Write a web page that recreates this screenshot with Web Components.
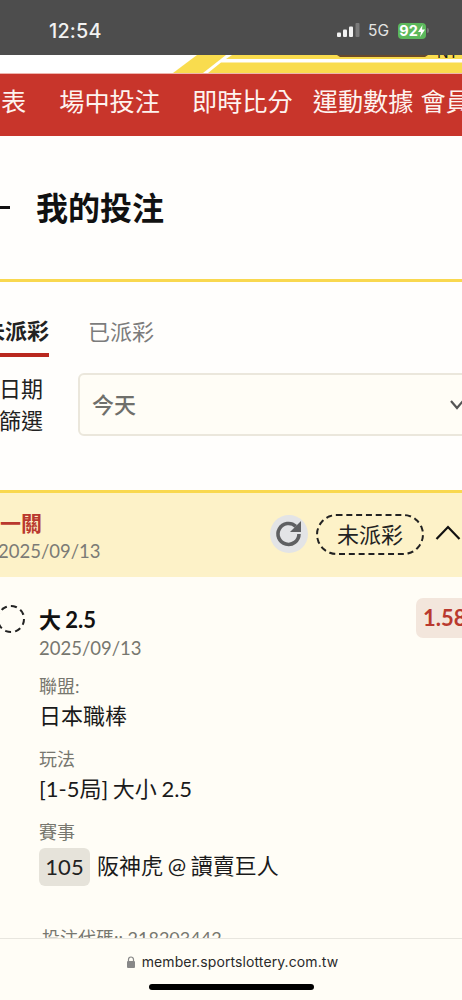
<!DOCTYPE html>
<html lang="zh-Hant"><head><meta charset="utf-8"><title>我的投注</title>
<style>
html,body{margin:0;padding:0;background:#fffefc}
body{font-family:Lato,"Noto Sans CJK TC",sans-serif;width:462px;height:1000px;overflow:hidden}
</style></head><body>
<app-page></app-page>
<script>
const FONT='Lato,"Noto Sans CJK TC",sans-serif';
function def(name,html){
  customElements.define(name,class extends HTMLElement{
    constructor(){super();this.attachShadow({mode:'open'}).innerHTML=html;}
  });
}
def('status-bar',`<style>
:host{display:flex;align-items:center;height:55px;background:#4d4d4d;color:#f2f2f2;box-sizing:border-box;padding:6px 0 0 49px;font-family:Inter,Roboto,sans-serif}
.t{font-size:19.800px;font-weight:500;letter-spacing:.2px}
.r{margin-left:auto;display:flex;align-items:center;margin-right:33px}
.g{font-size:15.500px;margin:0 9px 0 8px;color:#e4e4e4}
.b{display:flex;align-items:center;justify-content:center;width:28px;height:16px;background:#5cb85c;border-radius:4px;color:#fff;font-size:14.500px;font-weight:700;line-height:16px}
.n{width:2px;height:5px;background:#777;border-radius:0 2px 2px 0;margin-left:1px}
</style><span class="t">12:54</span><div class="r">
<svg width="23" height="15" viewBox="0 0 23 15"><rect x="0" y="9.500" width="4" height="4.500" rx="1" fill="#f2f2f2"/><rect x="6" y="6.500" width="4" height="7.500" rx="1" fill="#f2f2f2"/><rect x="12" y="3.500" width="4" height="10.500" rx="1" fill="#f2f2f2"/><rect x="18.500" y="0" width="4" height="14" rx="1" fill="#7a7a7a"/></svg>
<span class="g">5G</span><span class="b">92<svg width="7" height="12" viewBox="0 0 7 12"><path d="M4.500 0 0 7h3l-1 5 5-7.500H4z" fill="#fff"/></svg></span><span class="n"></span></div>`);
def('top-band',`<style>
:host{display:block;height:18px;background:#fff;overflow:hidden}
svg{display:block}
</style><svg width="462" height="18" viewBox="0 0 462 18">
<path d="M197 0 173 18H203L226 0Z" fill="#f9dc4e"/>
<path d="M232 0 226 4H462V0Z" fill="#f9dc4e"/>
<path d="M221 7.500H462V18H208Z" fill="#f9dc4e"/>
<path d="M337 0H428L425 2H340Z" fill="#6a4a2a"/>
<text x="437" y="3" font-family="Liberation Sans,sans-serif" font-size="16" fill="#222">NT</text></svg>`);
def('main-nav',`<style>
:host{display:flex;height:63px;align-items:center;background:#c8352b;color:#fdf3ef;white-space:nowrap;overflow:hidden;border-top:1px solid #eeb5ae;box-sizing:border-box;font:400 25.200px/1 ${FONT};padding:0 0 6px 0;}
span{flex:none}
</style><span style="margin-left:1px">表</span><span style="margin-left:33px">場中投注</span><span style="margin-left:32px">即時比分</span><span style="margin-left:20px">運動數據</span><span style="margin-left:7px">會員</span>`);
def('page-title',`<style>
:host{display:flex;align-items:center;height:146px;box-sizing:border-box;border-bottom:3px solid #f9d84f;background:#fffefc;color:#111;font:700 32px/1 ${FONT}}
i{display:block;width:10px;height:3px;background:#111;margin-right:26px}
</style><i></i><slot></slot>`);
def('bet-tabs',`<style>
:host{display:flex;height:91px;box-sizing:border-box;padding-top:39px;background:#fffefc;font:400 22px/1 ${FONT};overflow:hidden;align-items:flex-start}
.a{font-weight:700;color:#222;margin-left:-17px;width:66px;height:37px;box-sizing:border-box;border-bottom:4px solid #b9281f;margin-top:-1px;margin-right:39px;white-space:nowrap}
.b{color:#7c7c7c}
</style><span class="a">未派彩</span><span class="b">已派彩</span>`);
def('date-filter',`<style>
:host{display:flex;height:63px;background:#fffefc;font:400 22px/32px ${FONT};color:#222;align-items:center;overflow:visible}
.l{width:79px;flex:none;margin:1px 0 0 -1px}
.s{flex:none;width:420px;height:63px;box-sizing:border-box;background:#fffdf6;border:2px solid #ebe7dc;border-radius:6px;display:flex;align-items:center;padding-left:12px;color:#6f6f6b;font-weight:500}
</style><div class="l">日期<br>篩選</div><div class="s">今天<svg width="14" height="10" viewBox="0 0 14 10" style="margin-left:314px;flex:none"><path d="M1 1 7 8 13 1" stroke="#555" stroke-width="2.200" fill="none"/></svg></div>`);
def('card-head',`<style>
:host{display:flex;align-items:center;height:87px;box-sizing:border-box;margin-top:54px;border-top:3px solid #f9d84f;background:#fdf2c8;overflow:hidden}
.l{flex:none;margin-left:-21px;width:272px}
.n{font:700 21px/26px ${FONT};color:#b9392e;margin-top:1px}
.d{font:400 18.500px/26px ${FONT};color:#7b7b76;margin:2px 0 -3px 19px}
.r{width:38px;height:38px;border-radius:50%;background:#e3e4e6;display:flex;align-items:center;justify-content:center;flex:none;margin:-2px 8px 0 19px}
.p{flex:none;width:108px;height:41px;box-sizing:border-box;border:2px dashed #222;border-radius:21px;display:flex;align-items:center;justify-content:center;font:400 22px/1 ${FONT};color:#222;margin-top:-1px}
.c{margin:-6px 0 0 11px;flex:none}
</style><div class="l"><div class="n">二一關</div><div class="d">2025/09/13</div></div>
<span class="r"><svg width="30" height="30" viewBox="0 0 30 30"><path d="M25 15a10.500 10.500 0 1 1-3.200-7.600" stroke="#5f6062" stroke-width="3.600" fill="none"/><path d="M27 2v11H16z" fill="#5f6062"/></svg></span>
<span class="p">未派彩</span><svg class="c" width="26" height="15" viewBox="0 0 26 15"><path d="M1.500 14 13 2 24.500 14" stroke="#111" stroke-width="2.200" fill="none"/></svg>`);
def('bet-field',`<style>
:host{display:block;margin-left:39px;margin-bottom:14px}
.k{font:400 18px/25px ${FONT};color:#77776f}
.v{font:400 22px/34px ${FONT};color:#1a1a1a;display:flex;align-items:center;word-spacing:-1px}
</style><div class="k"><slot name="k"></slot></div><div class="v"><slot></slot></div>`);
def('bet-body',`<style>
:host{display:block;background:#fffdf6;height:423px;overflow:hidden;box-sizing:border-box;padding-top:28px}
.top{display:flex;align-items:flex-start}
.o{flex:none;width:28px;height:28px;box-sizing:border-box;border:2px dashed #222;border-radius:50%;margin:0 0 0 -3px}
.m{margin-left:14px;flex:1}
.t{font:700 22px/30px ${FONT};color:#111;word-spacing:-1px}
.d{font:400 18.500px/26px ${FONT};color:#77776f;margin-bottom:13px}
.odd{flex:none;width:70px;height:40px;margin:-7px -24px 0 0;background:#f3e6dc;border-radius:7px;font:700 22px/40px ${FONT};color:#b9392e;padding-left:7px;box-sizing:border-box}
.code{font:400 18px/24px ${FONT};color:#77776f;margin:40px 0 0 42px;white-space:nowrap}
</style><div class="top"><span class="o"></span><div class="m"><div class="t">大 2.5</div><div class="d">2025/09/13</div></div><div class="odd">1.58</div></div>
<div><slot></slot></div><div class="code">投注代碼:: 218203442</div>`);
def('event-tag',`<style>
:host{display:inline-flex;align-items:center;justify-content:center;width:51px;height:38px;background:#e6e3da;border-radius:6px;font:400 22px/1 ${FONT};color:#222;margin:3px 7px 0 0;flex:none}
</style><slot></slot>`);
def('browser-bar',`<style>
:host{position:absolute;left:0;right:0;bottom:0;height:62px;box-sizing:border-box;border-top:1px solid #e8e6df;background:#fffdf6;display:block}
.u{position:absolute;top:14px;left:0;width:100%;box-sizing:border-box;padding-left:3px;display:flex;justify-content:center;align-items:center;font:400 14px/18px Inter,Roboto,sans-serif;color:#2a2a2a;letter-spacing:.1px}
svg{margin-right:7px}
.h{position:absolute;left:149px;top:45px;width:165px;height:6px;border-radius:3px;background:#000}
</style><div class="u"><svg width="8" height="12" viewBox="0 0 8 12"><path d="M1.500 5V3.500a2.500 2.500 0 0 1 5 0V5" stroke="#888" stroke-width="1.200" fill="none"/><rect y="5" width="8" height="7" rx="1" fill="#888"/></svg>member.sportslottery.com.tw</div><div class="h"></div>`);
def('app-page',`<style>
:host{display:block;position:relative;width:462px;height:1000px;overflow:hidden;background:#fffefc;font-family:${FONT}}
</style><status-bar></status-bar><top-band></top-band><main-nav></main-nav>
<page-title>我的投注</page-title><bet-tabs></bet-tabs><date-filter></date-filter><card-head></card-head>
<bet-body>
<bet-field><span slot="k">聯盟:</span>日本職棒</bet-field>
<bet-field><span slot="k">玩法</span>[1-5局] 大小 2.5</bet-field>
<bet-field><span slot="k">賽事</span><event-tag>105</event-tag>阪神虎 @ 讀賣巨人</bet-field>
</bet-body>
<browser-bar></browser-bar>`);
</script></body></html>
